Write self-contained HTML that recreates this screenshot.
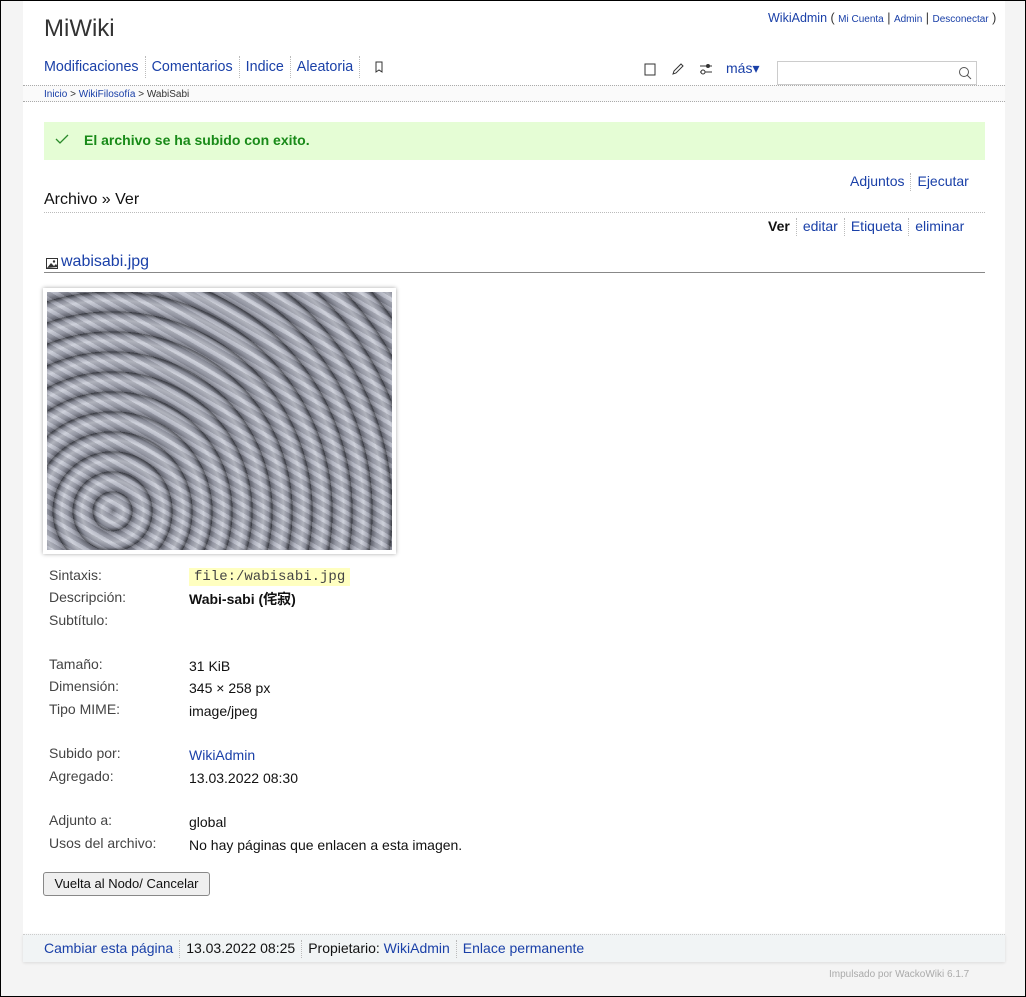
<!DOCTYPE html>
<html><head><meta charset="utf-8"><style>
*{margin:0;padding:0;box-sizing:border-box}
html,body{width:1026px;height:997px;overflow:hidden}
body{background:#f4f4f4;font-family:"Liberation Sans","Noto Sans CJK JP",sans-serif;font-size:14px;color:#111;position:relative;border:1px solid #000}
a{color:#1a40a8;text-decoration:none}
.abs{position:absolute;white-space:nowrap}
#page{position:absolute;left:22px;top:0;width:982px;height:934px;background:#fff}
.sep{border-left:1px dotted #bbb;height:22px;display:inline-block;vertical-align:middle;margin:0 6px}
.dl{color:#444}
</style></head><body>
<div id="page"></div>
<div class="abs" style="left:43px;top:14px;font-size:24px;color:#333">MiWiki</div>
<div class="abs" style="left:767px;top:10px;font-size:12.5px;color:#333"><a href="#">WikiAdmin</a> ( <a href="#" style="font-size:10px">Mi Cuenta</a> | <a href="#" style="font-size:10px">Admin</a> | <a href="#" style="font-size:10px">Desconectar</a> )</div>
<div class="abs" style="left:43px;top:55px;font-size:14.3px;line-height:22px"><a href="#">Modificaciones</a><span class="sep"></span><a href="#">Comentarios</a><span class="sep"></span><a href="#">Indice</a><span class="sep"></span><a href="#">Aleatoria</a><span class="sep"></span>
<svg width="14" height="14" viewBox="0 0 14 14" style="vertical-align:middle;margin-left:2px"><path d="M4 2h6v10l-3-2-3 2z" fill="none" stroke="#333"/></svg></div>
<svg class="abs" style="left:643px;top:62px" width="12" height="13"><rect x="1" y="1" width="10" height="11" fill="none" stroke="#333"/></svg>
<svg class="abs" style="left:670px;top:61px" width="14" height="14"><path d="M2 12l1-3 7-7 2 2-7 7z" fill="none" stroke="#333"/></svg>
<svg class="abs" style="left:698px;top:61px" width="14" height="14"><path d="M1 4h12M1 10h12" stroke="#333"/><circle cx="9" cy="4" r="2" fill="#333"/><circle cx="4" cy="10" r="2" fill="#fff" stroke="#333"/></svg>
<div class="abs" style="left:725px;top:59px;font-size:14px"><a href="#">más▾</a></div>
<div class="abs" style="left:776px;top:60px;width:200px;height:24px;border:1px solid #ccc;background:#fff"></div>
<svg class="abs" style="left:957px;top:65px" width="14" height="14"><circle cx="6" cy="6" r="4.5" fill="none" stroke="#555"/><path d="M9 9l4 4" stroke="#555"/></svg>
<div class="abs" style="left:22px;top:84px;width:982px;height:17px;border-top:1px dotted #aaa;border-bottom:1px dotted #aaa;background:#fafafa"></div>
<div class="abs" style="left:43px;top:88px;font-size:10px;color:#333"><a href="#">Inicio</a> &gt; <a href="#">WikiFilosofía</a> &gt; WabiSabi</div>
<div class="abs" style="left:43px;top:121px;width:941px;height:38px;background:#e5fdd5"></div>
<svg class="abs" style="left:54px;top:132px" width="14" height="12"><path d="M1 6l4 4 8-8" fill="none" stroke="#2a8a2a" stroke-width="1.3"/></svg>
<div class="abs" style="left:83px;top:131px;font-size:14px;font-weight:bold;color:#188a18">El archivo se ha subido con exito.</div>
<div class="abs" style="left:849px;top:172px;font-size:14px"><a href="#">Adjuntos</a><span class="sep" style="height:18px"></span><a href="#">Ejecutar</a></div>
<div class="abs" style="left:43px;top:190px;font-size:16px;color:#111">Archivo » Ver</div>
<div class="abs" style="left:43px;top:211px;width:941px;border-top:1px dotted #bbb"></div>
<div class="abs" style="left:767px;top:217px;font-size:14px"><b>Ver</b><span class="sep" style="height:18px"></span><a href="#">editar</a><span class="sep" style="height:18px"></span><a href="#">Etiqueta</a><span class="sep" style="height:18px"></span><a href="#">eliminar</a></div>
<svg class="abs" style="left:45px;top:257px" width="12" height="11"><rect x="0.5" y="0.5" width="11" height="10" fill="#fff" stroke="#333"/><path d="M1 10l4-5 3 3 2-2 2 3z" fill="#333"/><circle cx="8" cy="3.5" r="1.2" fill="#333"/></svg>
<div class="abs" style="left:60px;top:252px;font-size:16px"><a href="#">wabisabi.jpg</a></div>
<div class="abs" style="left:43px;top:271px;width:941px;border-top:1px solid #888"></div>
<div class="abs" style="left:42px;top:287px;width:353px;height:266px;background:#fff;box-shadow:0 0 4px rgba(0,0,0,.35)"></div>
<div class="abs" style="left:46px;top:291px;width:345px;height:258px;background:
repeating-radial-gradient(circle at 19% 85%,#6a6c78 0,#a5a8b6 5px,#c8cbd6 11px,#9a9dab 16px,#3e4048 20px),#999"></div>
<div class="abs" style="left:46px;top:291px;width:345px;height:258px;background:repeating-linear-gradient(30deg,rgba(255,255,255,.12) 0 4px,rgba(0,0,0,.12) 4px 9px)"></div>
<div class="abs dl" style="left:48px;top:563px;line-height:22.3px;font-size:14px">Sintaxis:<br>Descripción:<br>Subtítulo:<br><br>Tamaño:<br>Dimensión:<br>Tipo MIME:<br><br>Subido por:<br>Agregado:<br><br>Adjunto a:<br>Usos del archivo:</div>
<div class="abs" style="left:188px;top:563px;line-height:22.3px;font-size:14px"><span style="background:#ffffc0;font-family:'Liberation Mono',monospace;color:#444;padding:1px 5px">file:/wabisabi.jpg</span><br><b>Wabi-sabi (侘寂)</b><br>&nbsp;<br><br>31 KiB<br>345 × 258 px<br>image/jpeg<br><br><a href="#">WikiAdmin</a><br>13.03.2022 08:30<br><br>global<br>No hay páginas que enlacen a esta imagen.</div>
<div class="abs" style="left:42px;top:871px;width:167px;height:24px;border:1px solid #888;border-radius:3px;background:#efefef;font-size:13px;line-height:22px;text-align:center;color:#111">Vuelta al Nodo/ Cancelar</div>
<div class="abs" style="left:22px;top:933px;width:982px;height:28px;background:#f1f4f5;border-top:1px dotted #ccc;box-shadow:0 1px 3px rgba(0,0,0,.1)"></div>
<div class="abs" style="left:43px;top:938px;font-size:14px;line-height:18px;color:#111"><a href="#">Cambiar esta página</a><span class="sep" style="height:18px"></span>13.03.2022 08:25<span class="sep" style="height:18px"></span>Propietario: <a href="#">WikiAdmin</a><span class="sep" style="height:18px"></span><a href="#">Enlace permanente</a></div>
<div class="abs" style="left:828px;top:968px;font-size:10px;color:#aaa">Impulsado por WackoWiki 6.1.7</div>
</body></html>
